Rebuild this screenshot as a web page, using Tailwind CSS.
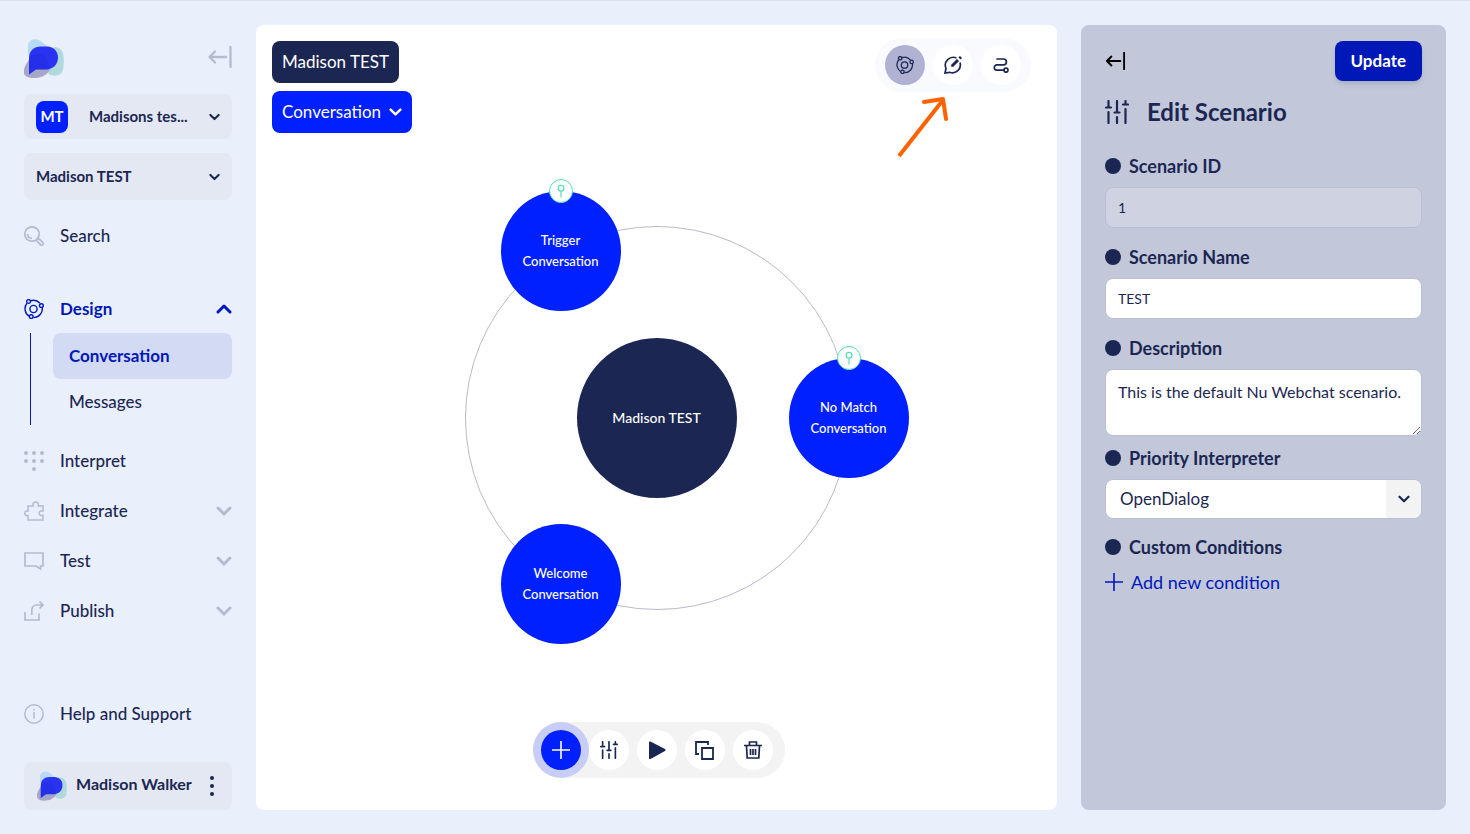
<!DOCTYPE html>
<html lang="en">
<head>
    <meta charset="UTF-8" />
    <meta name="viewport" content="width=device-width, initial-scale=1.0" />
    <title>OpenDialog - Conversation Designer</title>
    <script src="https://cdn.jsdelivr.net/npm/@tailwindcss/browser@4"></script>
</head>
<body class="bg-[#eaeffc] border-t border-[#dcdfec] min-h-screen flex font-[Lato,sans-serif] text-[#1b2752]">

<!-- Shared icons -->
<svg class="hidden">
    <symbol id="logo" viewBox="0 0 40 40">
        <path d="M4 10C3 3 8 0 13 1c5 1 8 6 13 8l2 12-14 4C6 20 3 17 4 10z" fill="#b7daf6" />
        <path d="M28 9c6-1 9 1 11 6 1 5 1 11 0 16-2 7-9 7-14 5l-4-12z" fill="#b0d9de" />
        <path d="M6 20C2 25-1 30 0 35c2 5 9 5 15 4 5-1 9-4 11-8L14 18z" fill="#a6a6c8" />
        <path d="M5 36V20C5 12 10 8 17 8h6c7 0 11 5 11 11 0 7-5 12-12 12H12z" fill="#2a33f2" />
        <path d="M5 20c3-5 9-6 13-4 5 2 7 8 7 15H12l-7 5z" fill="#1a22c4" opacity=".2" />
    </symbol>
    <symbol id="atom" viewBox="0 0 20 20" fill="none" stroke="currentColor" stroke-width="1.4">
        <circle cx="9.5" cy="10" r="3.6" />
        <path d="M6.300 1.900A8.900 8.900 0 0 1 16 4.300M18.300 8.500A8.900 8.900 0 0 1 9.500 18.600M5 17.200A8.900 8.900 0 0 1 3 4.200" />
        <circle cx="4.600" cy="2.500" r="1.900" />
        <circle cx="17.400" cy="6.600" r="1.900" />
        <circle cx="7.200" cy="17.600" r="1.900" />
    </symbol>
    <symbol id="sliders" viewBox="0 0 24 24" fill="none" stroke="currentColor" stroke-width="2.200" stroke-linecap="round">
        <path d="M3.500 1v6M3.500 12v11M12 1v11M12 17v6M20.500 1v3M20.500 9v14M1 7.500h5M9.500 12.500h5M18 4.500h5" />
    </symbol>
    <symbol id="chevron" viewBox="0 0 16 10" fill="none" stroke="currentColor" stroke-linecap="round" stroke-linejoin="round">
        <path d="M2 2l6 6 6-6" />
    </symbol>
    <symbol id="collapse" viewBox="0 0 24 22" fill="none" stroke="currentColor" stroke-width="2.300" stroke-linecap="round" stroke-linejoin="round">
        <path d="M18 11H1.500M7 5.500L1.500 11 7 16.500M22.500 1v20" />
    </symbol>
    <symbol id="pin" viewBox="0 0 24 24" fill="none" stroke="#4fe0b5" stroke-width="1.300">
        <circle cx="12" cy="9" r="3.200" />
        <path d="M12 12.200V19" />
    </symbol>
</svg>

<!-- Sidebar -->
<aside class="w-64 shrink-0 px-6 pt-[37px] pb-6 flex flex-col">
    <div class="flex items-start justify-between">
        <svg class="w-10 h-[41px]"><use href="#logo" /></svg>
        <button aria-label="Collapse menu" class="mt-2 text-[#b7bacf]"><svg class="w-6 h-[22px]"><use href="#collapse" /></svg></button>
    </div>

    <button class="mt-[15px] h-[45px] px-3 rounded-lg bg-[#e4e8f2] flex items-center text-[15px] font-bold">
        <span class="size-8 rounded-lg bg-[#0020ff] text-white text-[15px] flex items-center justify-center">MT</span>
        <span class="ml-[21px]">Madisons tes...</span>
        <svg class="ml-auto w-[11px] h-2 stroke-3"><use href="#chevron" /></svg>
    </button>
    <button class="mt-3.5 h-[47px] px-3 rounded-lg bg-[#e4e8f2] flex items-center justify-between text-[15px] font-bold">
        Madison TEST
        <svg class="w-[11px] h-2 stroke-3"><use href="#chevron" /></svg>
    </button>

    <nav class="mt-[11px] flex flex-col text-[17px] font-medium">
        <a href="#" class="h-[49px] flex items-center gap-4">
            <svg class="size-5 text-[#b7bacf]" viewBox="0 0 20 20" fill="none" stroke="currentColor" stroke-width="1.700">
                <circle cx="8" cy="8" r="7.200" />
                <path d="M3.500 8a4.500 4.500 0 0 0 4.500 4.300" />
                <path d="M12.800 14.800l3.600 3.900a1.600 1.600 0 0 0 2.400-2.300l-3.900-3.600a1.500 1.500 0 0 0-2.100 2z" />
            </svg>
            Search
        </a>

        <a href="#" class="mt-6 h-[49px] flex items-center gap-4 font-bold text-[#0018b8]">
            <svg class="size-5"><use href="#atom" /></svg>
            Design
            <svg class="ml-auto w-4 h-2.5 rotate-180 stroke-3"><use href="#chevron" /></svg>
        </a>
        <div class="ml-1.5 pl-[22px] border-l border-[#0018b8] flex flex-col">
            <a href="#" class="h-[46px] px-4 rounded-lg bg-[#d3daf3] flex items-center font-bold text-[#0018b8]">Conversation</a>
            <a href="#" class="h-[46px] px-4 flex items-center">Messages</a>
        </div>

        <a href="#" class="mt-[11px] h-[50px] flex items-center gap-4">
            <svg class="size-5 text-[#b7bacf]" viewBox="0 0 20 20" fill="currentColor">
                <circle cx="2" cy="2" r="2" /><circle cx="10" cy="2" r="2" /><circle cx="18" cy="2" r="2" />
                <circle cx="2" cy="10" r="2" /><circle cx="10" cy="10" r="2" /><circle cx="18" cy="10" r="2" />
                <circle cx="10" cy="18" r="2" />
            </svg>
            Interpret
        </a>
        <a href="#" class="h-[50px] flex items-center gap-4">
            <svg class="size-5 text-[#b7bacf]" viewBox="0 0 20 20" fill="none" stroke="currentColor" stroke-width="1.500">
                <path d="M4 5h5.200C8.500 2.500 10 1 11.700 1s3.200 1.500 2.500 4H19v5c-2.500-.800-3.800.800-3.800 2.200s1.300 3 3.800 2.200V19H4v-4.300c-2 .300-3.200-1-3.200-2.500S2 9.500 4 10z" />
            </svg>
            Integrate
            <svg class="ml-auto w-4 h-2.5 text-[#b7bacf] stroke-3"><use href="#chevron" /></svg>
        </a>
        <a href="#" class="h-[50px] flex items-center gap-4">
            <svg class="size-5 text-[#b7bacf]" viewBox="0 0 20 20" fill="none" stroke="currentColor" stroke-width="1.700">
                <path d="M1 2h18v13h-2.500v3L12 15H1z" />
            </svg>
            Test
            <svg class="ml-auto w-4 h-2.5 text-[#b7bacf] stroke-3"><use href="#chevron" /></svg>
        </a>
        <a href="#" class="h-[50px] flex items-center gap-4">
            <svg class="size-5 text-[#b7bacf]" viewBox="0 0 20 20" fill="none" stroke="currentColor" stroke-width="1.700">
                <path d="M1 11v8h14v-6.500M7.800 14V9.500c0-3 2-5.500 5-5.500H19M15.500.500L19 4l-3.500 3.500" />
            </svg>
            Publish
            <svg class="ml-auto w-4 h-2.5 text-[#b7bacf] stroke-3"><use href="#chevron" /></svg>
        </a>
    </nav>

    <a href="#" class="mt-auto h-[49px] flex items-center gap-4 text-[17px] font-medium">
        <svg class="size-5 text-[#b7bacf]" viewBox="0 0 20 20" fill="none" stroke="currentColor" stroke-width="1.500">
            <circle cx="10" cy="10" r="9.200" />
            <path d="M10 8v6.500M10 4.800v1.700" />
        </svg>
        Help and Support
    </a>
    <div class="mt-6 h-12 pl-[13px] pr-3 rounded-lg bg-[#e4e8f2] flex items-center">
        <svg class="size-[30px]"><use href="#logo" /></svg>
        <span class="ml-[9px] pb-1 text-base font-bold">Madison Walker</span>
        <button aria-label="Account menu" class="ml-auto px-1.5">
            <svg class="w-1 h-5" viewBox="0 0 4 20" fill="currentColor"><circle cx="2" cy="2" r="2" /><circle cx="2" cy="10" r="2" /><circle cx="2" cy="18" r="2" /></svg>
        </button>
    </div>
</aside>

<!-- Canvas -->
<main class="relative flex-1 mt-6 mb-6 rounded-lg bg-white">
    <div class="p-4 flex flex-col items-start gap-2 text-[17px] text-white">
        <button class="h-[42px] px-2.5 rounded-lg bg-[#1b2752]">Madison TEST</button>
        <button class="h-[42px] px-2.5 rounded-lg bg-[#0020ff] flex items-center gap-2">
            Conversation
            <svg class="w-[13px] h-2.5 stroke-3"><use href="#chevron" /></svg>
        </button>
    </div>

    <!-- View switch -->
    <div class="absolute top-[13px] right-[26px] px-2.5 py-[7px] rounded-full bg-[#f9fafe] flex gap-2">
        <button aria-label="Conversation view" class="size-10 rounded-full bg-[#b0b1d3] flex items-center justify-center">
            <svg class="size-[18px]"><use href="#atom" /></svg>
        </button>
        <button aria-label="Message view" class="size-10 rounded-full bg-white flex items-center justify-center">
            <svg class="size-[18px]" viewBox="0 0 18 18" fill="none" stroke="currentColor" stroke-width="1.700">
                <path d="M12.500 2A8 8 0 0 0 2 12.500L1 17l4.500-.700A8 8 0 0 0 16 6.500" />
                <path d="M8 10l6-6M15.500 2.500L17 1" stroke-width="3" />
                <path d="M7.500 10.500L9 9" />
            </svg>
        </button>
        <button aria-label="Flow view" class="size-10 rounded-full bg-white flex items-center justify-center">
            <svg class="w-4 h-[15px]" viewBox="0 0 16 15" fill="none" stroke="currentColor" stroke-width="1.700" stroke-linecap="round">
                <path d="M4 1h6.500a2.900 2.900 0 0 1 0 5.800H4a2.700 2.700 0 0 0 0 5.400h7" />
                <circle cx="13" cy="12.200" r="2" />
            </svg>
        </button>
    </div>
    <svg class="absolute top-[72px] right-[108px] w-[52px] h-[62px]" viewBox="0 0 52 62" fill="none" stroke="#ff6200" stroke-width="4" stroke-linejoin="round">
        <path d="M2 59L46 3" />
        <path d="M27 5l19-3 3 20" stroke-linecap="round" />
    </svg>

    <!-- Conversation orbit -->
    <div class="absolute inset-0 m-auto size-96 rounded-full border border-[#b9bacb] flex items-center justify-center text-[13px] font-medium leading-[21px] text-white text-center">
        <div class="size-40 rounded-full bg-[#1b2752] flex items-center justify-center text-[14px]">Madison TEST</div>
        <div class="absolute left-[35px] -top-9 size-30 rounded-full bg-[#0020ff] flex items-center justify-center">
            Trigger<br />Conversation
            <svg class="absolute -top-3 size-6 rounded-full border border-[#4fe0b5] bg-white"><use href="#pin" /></svg>
        </div>
        <div class="absolute left-[323px] top-[131px] size-30 rounded-full bg-[#0020ff] flex items-center justify-center">
            No Match<br />Conversation
            <svg class="absolute -top-3 size-6 rounded-full border border-[#4fe0b5] bg-white"><use href="#pin" /></svg>
        </div>
        <div class="absolute left-[35px] top-[297px] size-30 rounded-full bg-[#0020ff] flex items-center justify-center">Welcome<br />Conversation</div>
    </div>

    <!-- Bottom toolbar -->
    <div class="absolute bottom-8 left-1/2 -ml-[124px] p-2 pr-3 rounded-full bg-[#f3f3f3] flex gap-2">
        <button aria-label="Add" class="size-10 rounded-full bg-[#0020ff] ring-8 ring-[#c8cdf6] text-white flex items-center justify-center">
            <svg class="size-[18px]" viewBox="0 0 18 18" fill="none" stroke="currentColor" stroke-width="1.600"><path d="M9 0v18M0 9h18" /></svg>
        </button>
        <button aria-label="Settings" class="size-10 rounded-full bg-white flex items-center justify-center">
            <svg class="size-[18px]"><use href="#sliders" /></svg>
        </button>
        <button aria-label="Play" class="size-10 rounded-full bg-white flex items-center justify-center">
            <svg class="size-[18px]" viewBox="0 0 18 18" fill="currentColor" stroke="currentColor" stroke-width="2" stroke-linejoin="round"><path d="M2 1.500L16.500 9 2 17z" /></svg>
        </button>
        <button aria-label="Duplicate" class="size-10 rounded-full bg-white flex items-center justify-center">
            <svg class="size-[19px]" viewBox="0 0 19 19" fill="none" stroke="currentColor" stroke-width="1.800"><path d="M13 4V1H1v12h3M7 7h11v11H7z" /></svg>
        </button>
        <button aria-label="Delete" class="size-10 rounded-full bg-white flex items-center justify-center">
            <svg class="size-[18px]" viewBox="0 0 18 18" fill="none" stroke="currentColor" stroke-width="1.700"><path d="M0 4.500h18M5.500 4V1h7v3M2.500 5l.700 12h11.600l.700-12M6.500 8v6M9 8v6M11.500 8v6" /></svg>
        </button>
    </div>
</main>

<!-- Edit panel -->
<form class="w-[365px] shrink-0 m-6 px-6 pt-4 rounded-lg bg-[#c2c7da] flex flex-col">
    <div class="flex items-center justify-between">
        <button type="button" aria-label="Close panel" class="text-black"><svg class="w-[21px] h-[18px]"><use href="#collapse" /></svg></button>
        <button type="button" class="h-10 px-4 rounded-lg bg-[#0018b8] text-white text-[17px] font-bold shadow-md">Update</button>
    </div>
    <h1 class="mt-[15px] flex items-center gap-[18px] text-2xl font-bold">
        <svg class="size-6"><use href="#sliders" /></svg>
        Edit Scenario
    </h1>

    <label for="scenario-id" class="mt-5 h-[35px] flex items-center gap-2 text-lg font-bold"><span class="size-4 rounded-full bg-[#1b2752]"></span>Scenario ID</label>
    <input id="scenario-id" type="text" value="1" readonly class="mt-1 h-[41px] px-3 rounded-lg border border-[#b9bed4] bg-[#ced2e1] text-[14px]" />

    <label for="scenario-name" class="mt-[11px] h-[35px] flex items-center gap-2 text-lg font-bold"><span class="size-4 rounded-full bg-[#1b2752]"></span>Scenario Name</label>
    <input id="scenario-name" type="text" value="TEST" class="mt-1 h-[41px] px-3 rounded-lg border border-[#b9bed4] bg-white text-[14px]" />

    <label for="description" class="mt-[11px] h-[35px] flex items-center gap-2 text-lg font-bold"><span class="size-4 rounded-full bg-[#1b2752]"></span>Description</label>
    <textarea id="description" class="mt-1 h-[67px] px-3 py-3 rounded-lg border border-[#b9bed4] bg-white text-base leading-5 resize">This is the default Nu Webchat scenario.</textarea>

    <label for="interpreter" class="mt-1 h-[35px] flex items-center gap-2 text-lg font-bold"><span class="size-4 rounded-full bg-[#1b2752]"></span>Priority Interpreter</label>
    <div class="mt-1 h-10 grid">
        <select id="interpreter" class="col-start-1 row-start-1 appearance-none px-3.5 rounded-lg border border-[#b9bed4] bg-white text-[17px]">
            <option>OpenDialog</option>
        </select>
        <span class="col-start-1 row-start-1 justify-self-end m-px w-[35px] rounded-r-lg bg-[#f3f3f3] flex items-center justify-center pointer-events-none">
            <svg class="w-3 h-2 stroke-3"><use href="#chevron" /></svg>
        </span>
    </div>

    <h2 class="mt-2.5 h-[35px] flex items-center gap-2 text-lg font-bold"><span class="size-4 rounded-full bg-[#1b2752]"></span>Custom Conditions</h2>
    <button type="button" class="mt-0.5 h-8 flex items-center gap-2 text-lg text-[#0018b8]">
        <svg class="size-[18px]" viewBox="0 0 18 18" fill="none" stroke="currentColor" stroke-width="1.600"><path d="M9 0v18M0 9h18" /></svg>
        Add new condition
    </button>
</form>

</body>
</html>
